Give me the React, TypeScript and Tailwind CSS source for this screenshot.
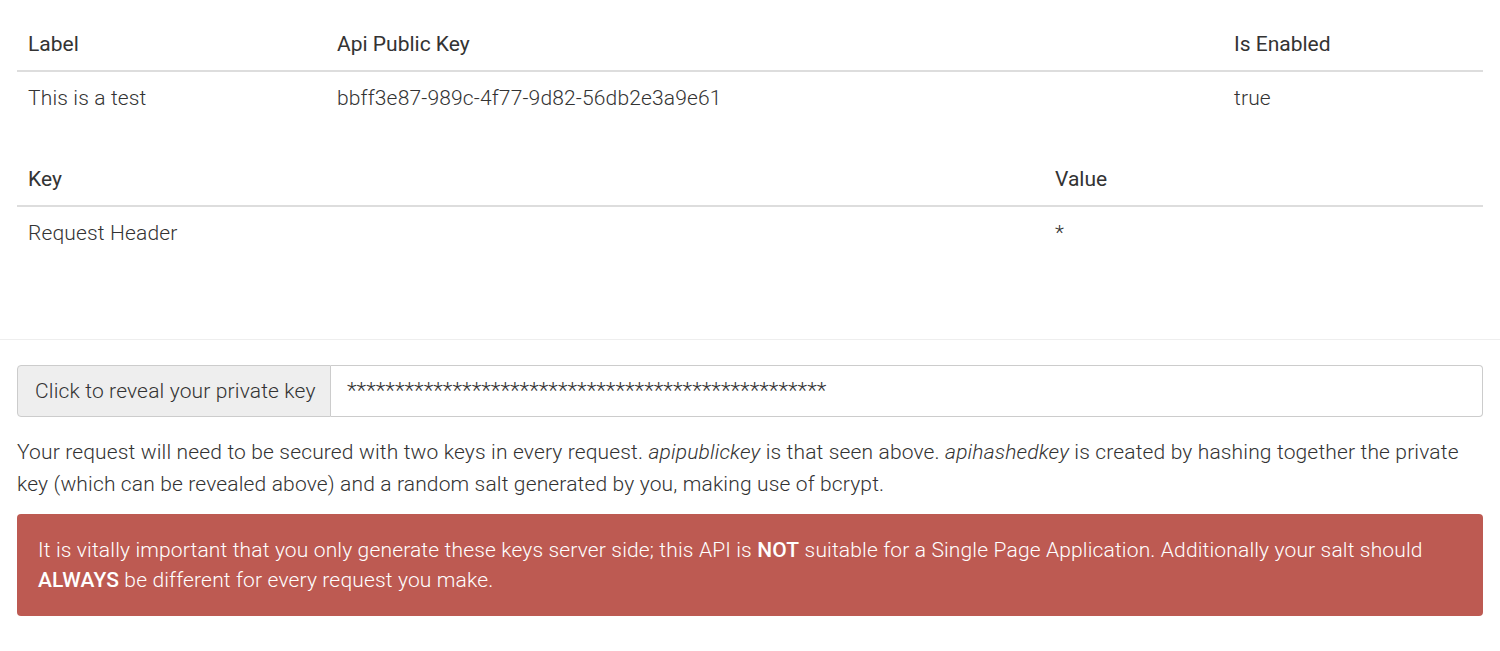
import React from "react";

export default function App() {
  const stars = "*".repeat(50);
  return (
    <div
      className="bg-white text-[#333] text-[21px] leading-[32px] font-light tracking-[0.15px] min-h-[651px]"
      style={{ fontFamily: "Roboto, 'Liberation Sans', sans-serif" }}
    >
      <div className="px-[17px] pt-[18px]">
        <table className="w-full border-collapse">
          <thead>
            <tr>
              <th className="w-[310px] text-left font-normal tracking-normal px-[11px] py-[10px] border-b-2 border-[#ddd]">Label</th>
              <th className="w-[897px] text-left font-normal tracking-normal px-[10px] py-[10px] border-b-2 border-[#ddd]">Api Public Key</th>
              <th className="text-left font-normal tracking-normal px-[10px] py-[10px] border-b-2 border-[#ddd]">Is Enabled</th>
            </tr>
          </thead>
          <tbody>
            <tr>
              <td className="px-[11px] py-[10px] border-t border-[#ddd]">This is a test</td>
              <td className="px-[10px] py-[10px] border-t border-[#ddd]">bbff3e87-989c-4f77-9d82-56db2e3a9e61</td>
              <td className="px-[10px] py-[10px] border-t border-[#ddd]">true</td>
            </tr>
          </tbody>
        </table>
        <table className="w-full border-collapse mt-[29px]">
          <thead>
            <tr>
              <th className="w-[1028px] text-left font-normal tracking-normal px-[11px] py-[10px] border-b-2 border-[#ddd]">Key</th>
              <th className="text-left font-normal tracking-normal px-[10px] py-[10px] border-b-2 border-[#ddd]">Value</th>
            </tr>
          </thead>
          <tbody>
            <tr>
              <td className="px-[11px] py-[10px] border-t border-[#ddd]">Request Header</td>
              <td className="px-[10px] py-[10px] border-t border-[#ddd]">*</td>
            </tr>
          </tbody>
        </table>
      </div>
      <div className="mt-[80px] border-t border-[#eee]" />
      <div className="px-[17px] pt-[25px]">
        <div className="flex h-[52px]">
          <div className="flex items-center bg-[#eee] border border-[#ccc] rounded-l-[4px] px-[17px] whitespace-nowrap w-[314px]">
            Click to reveal your private key
          </div>
          <div className="flex-1 flex items-center border border-l-0 border-[#ccc] rounded-r-[4px] px-[16px] text-[22.6px] tracking-normal overflow-hidden whitespace-nowrap">
            {stars}
          </div>
        </div>
        <p className="mt-[19px]">
          Your request will need to be secured with two keys in every request. <em>apipublickey</em> is that seen above.{" "}
          <em>apihashedkey</em> is created by hashing together the private key (which can be revealed above) and a random salt
          generated by you, making use of bcrypt.
        </p>
        <div className="mt-[14px] bg-[#bd5a52] text-white rounded-[4px] px-[21px] py-[21px] leading-[30px]">
          It is vitally important that you only generate these keys server side; this API is{" "}
          <strong className="font-medium">NOT</strong> suitable for a Single Page Application. Additionally your salt should{" "}
          <strong className="font-medium">ALWAYS</strong> be different for every request you make.
        </div>
      </div>
    </div>
  );
}
